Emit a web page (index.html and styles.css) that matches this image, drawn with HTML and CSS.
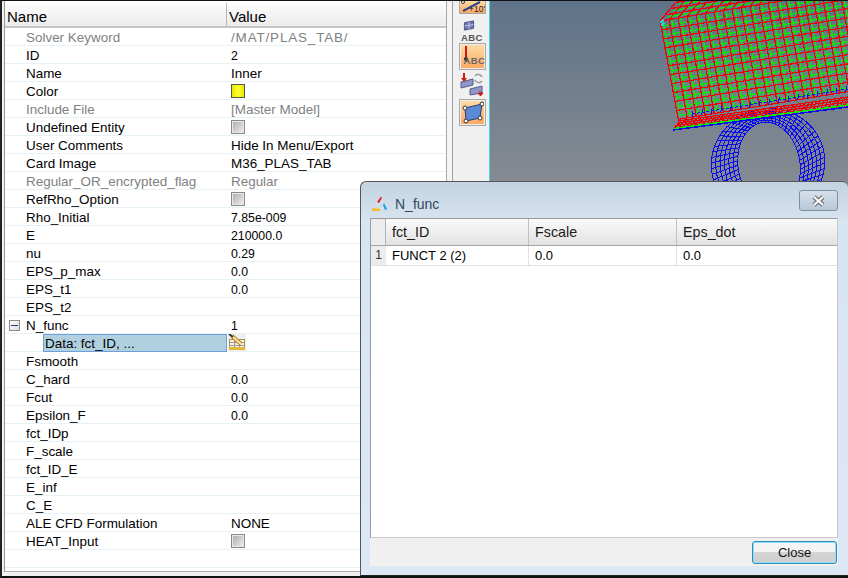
FILE: index.html
```html
<!DOCTYPE html>
<html lang="en">
<head>
<meta charset="utf-8">
<title>N_func</title>
<link rel="stylesheet" href="styles.css">
</head>
<body>
<div class="app">
  <section class="panel">
    <div class="head"><div class="head-name">Name</div><div class="head-value">Value</div></div>
    <div class="row off"><div class="n">Solver Keyword</div><div class="v wide">/MAT/PLAS_TAB/</div></div>
    <div class="row"><div class="n">ID</div><div class="v num">2</div></div>
    <div class="row"><div class="n">Name</div><div class="v">Inner</div></div>
    <div class="row"><div class="n">Color</div><div class="v"><span class="swatch"></span></div></div>
    <div class="row off"><div class="n">Include File</div><div class="v">[Master Model]</div></div>
    <div class="row"><div class="n">Undefined Entity</div><div class="v"><span class="check"></span></div></div>
    <div class="row"><div class="n">User Comments</div><div class="v">Hide In Menu/Export</div></div>
    <div class="row"><div class="n">Card Image</div><div class="v">M36_PLAS_TAB</div></div>
    <div class="row off"><div class="n">Regular_OR_encrypted_flag</div><div class="v">Regular</div></div>
    <div class="row"><div class="n">RefRho_Option</div><div class="v"><span class="check"></span></div></div>
    <div class="row"><div class="n">Rho_Initial</div><div class="v num">7.85e-009</div></div>
    <div class="row"><div class="n">E</div><div class="v num">210000.0</div></div>
    <div class="row"><div class="n">nu</div><div class="v num">0.29</div></div>
    <div class="row"><div class="n">EPS_p_max</div><div class="v num">0.0</div></div>
    <div class="row"><div class="n">EPS_t1</div><div class="v num">0.0</div></div>
    <div class="row"><div class="n">EPS_t2</div><div class="v"></div></div>
    <div class="row"><div class="n tree"><span class="minus"></span>N_func</div><div class="v num">1</div></div>
    <div class="row"><div class="n data"><span class="data-sel">Data: fct_ID, ...</span></div><div class="v edit">
      <svg class="edit-icon" width="18" height="17" viewBox="0 0 18 17"><rect x="1.500" y="5.500" width="15" height="10" fill="#fbf3d8" stroke="#a8965a"/><path d="M1 8.500h16M1 11.500h16M6.500 5v10M11.500 5v10" stroke="#9a9a9a"/><rect x="1" y="13" width="16" height="3" fill="#e3b836"/><path d="M4 2l9 8" stroke="#b87a20" stroke-width="4"/><path d="M4 2l9 8" stroke="#ffe9a8" stroke-width="2"/><path d="M1 0l4 3" stroke="#333" stroke-width="2"/></svg>
    </div></div>
    <div class="row"><div class="n">Fsmooth</div><div class="v"></div></div>
    <div class="row"><div class="n">C_hard</div><div class="v num">0.0</div></div>
    <div class="row"><div class="n">Fcut</div><div class="v num">0.0</div></div>
    <div class="row"><div class="n">Epsilon_F</div><div class="v num">0.0</div></div>
    <div class="row"><div class="n">fct_IDp</div><div class="v"></div></div>
    <div class="row"><div class="n">F_scale</div><div class="v"></div></div>
    <div class="row"><div class="n">fct_ID_E</div><div class="v"></div></div>
    <div class="row"><div class="n">E_inf</div><div class="v"></div></div>
    <div class="row"><div class="n">C_E</div><div class="v"></div></div>
    <div class="row"><div class="n">ALE CFD Formulation</div><div class="v">NONE</div></div>
    <div class="row"><div class="n">HEAT_Input</div><div class="v"><span class="check"></span></div></div>
    <div class="row"></div>
  </section>
  <div class="strip"></div>
  <nav class="tools">
    <div class="tool tool-cut">
      <svg width="25" height="12" viewBox="0 0 25 12"><path d="M3 10L20 1" stroke="#2b4a8c" stroke-width="2"/><circle cx="3" cy="1" r="1.500" fill="#fff" stroke="#333"/><text x="9" y="11" class="tool-num">+10'</text></svg>
    </div>
    <div class="plain">
      <svg width="12" height="12" viewBox="0 0 12 12"><path d="M1 3l10-2v8L1 11z" fill="#7078b4" stroke="#3e4678"/><path d="M6 2v8M1 6.500l10-1.500" stroke="#c8cce8"/></svg>
      <span class="abc">ABC</span>
    </div>
    <div class="tool tool-abc">
      <svg class="pin" width="6" height="16" viewBox="0 0 6 16"><path d="M3 0v11" stroke="#d01818" stroke-width="2"/><circle cx="3" cy="13" r="2" fill="#222"/></svg>
      <span class="abc abc-on">ABC</span>
    </div>
    <div class="plain swap">
      <svg width="24" height="24" viewBox="0 0 24 24"><path d="M1 10l12-3v6L1 16z" fill="#8f96c8" stroke="#555c88"/><path d="M10 17l12-3v7l-12 2z" fill="#8f96c8" stroke="#555c88"/><path d="M4 1v5" stroke="#d01818" stroke-width="2"/><path d="M1 6h6l-3 4z" fill="#d01818"/><path d="M20 20v-1M18 21h5l-2.500 3z" fill="#d01818" stroke="#d01818"/><path d="M15 4a4 4 0 0 1 7 1M22 9a4 4 0 0 1-7-1" stroke="#999" stroke-width="1.500" fill="none"/></svg>
    </div>
    <div class="tool">
      <svg width="23" height="23" viewBox="0 0 23 23"><path d="M4 7L21 3 19 17 5 20z" fill="#5b8bd6" stroke="#2c3f66"/><circle cx="4" cy="7" r="2" fill="#fff" stroke="#333"/><circle cx="21" cy="3" r="2" fill="#fff" stroke="#333"/><circle cx="19" cy="17" r="2" fill="#fff" stroke="#333"/><circle cx="5" cy="20" r="2" fill="#fff" stroke="#333"/></svg>
    </div>
  </nav>
  <main class="view">
    <svg id="mesh" class="mesh" viewBox="490 1 358 575" width="358" height="575"></svg>
  </main>
</div>
<div class="dialog">
  <div class="title">
    <svg class="logo" width="18" height="18" viewBox="0 0 18 18"><path d="M9 3L2 15h14z" fill="none" stroke="#d8dde3" stroke-width="2"/><path d="M6 7l4-5.500 1 1.500-3 5z" fill="#d8222e"/><path d="M13 8l3 6-2 1-2-5z" fill="#18a0e0"/><path d="M1 13l8 1v2H1z" fill="#f4b82c"/></svg>
    <span class="title-text">N_func</span>
    <button class="x" type="button" aria-label="Close window"><svg width="15" height="12" viewBox="0 0 15 12"><path d="M3 2l9 8M12 2l-9 8" stroke="#777" stroke-width="4.500"/><path d="M3 2l9 8M12 2l-9 8" stroke="#fff" stroke-width="2"/></svg></button>
  </div>
  <div class="table">
    <div class="t-head">
      <div class="t-corner"></div>
      <div class="t-h">fct_ID</div>
      <div class="t-h">Fscale</div>
      <div class="t-h">Eps_dot</div>
    </div>
    <div class="t-row">
      <div class="t-num">1</div>
      <div class="t-c">FUNCT 2 (2)</div>
      <div class="t-c">0.0</div>
      <div class="t-c">0.0</div>
    </div>
  </div>
  <div class="foot"><button class="close" type="button">Close</button></div>
</div>
<script src="mesh.js"></script>
</body>
</html>
```

FILE: styles.css
```css
* { box-sizing: border-box; }
html, body { margin: 0; padding: 0; }
body {
  width: 848px;
  height: 578px;
  overflow: hidden;
  position: relative;
  background: #f0f0f0;
  font-family: "Liberation Sans", Arial, sans-serif;
  font-size: 13px;
  color: #000;
}
.app {
  display: flex;
  height: 578px;
  border-top: 1px solid #111;
  border-bottom: 2px solid #111;
  border-left: 2px solid #222;
  overflow: hidden;
}

/* property panel */
.panel {
  width: 443px;
  flex: none;
  margin-left: 2px;
  background: #fff;
  border-left: 1px solid #999;
  border-right: 1px solid #aaa;
  border-bottom: 1px solid #a8a8a8;
  margin-bottom: 4px;
  overflow: hidden;
  font-size: 13.45px;
}
.head {
  display: flex;
  height: 26px;
  margin-top: 1px;
  padding-top: 1px;
  background: linear-gradient(#fdfdfd, #ececec);
  border-bottom: 2px solid #c4c4c4;
  font-size: 15px;
  line-height: 28px;
}
.head-name { width: 222px; padding-left: 2px; border-right: 1px solid #b4b4b4; }
.head-value { padding-left: 2px; }
.row {
  display: flex;
  height: 18px;
  line-height: 20px;
  border-bottom: 1px solid #e6f2f5;
}
.n { width: 222px; height: 17px; flex: none; padding-left: 21px; white-space: nowrap; }
.v { height: 17px; padding-left: 4px; white-space: nowrap; display: flex; align-items: flex-start; }
.num { font-size: 12.3px; }
.wide { letter-spacing: 0.85px; }
.off { color: #7f7f7f; }
.swatch, .check {
  display: block;
  width: 14px;
  height: 14px;
  margin-top: 2px;
}
.swatch { background: linear-gradient(90deg, #e8e800, #ffff30 50%, #e8e800); border: 1px solid #555; }
.check { background: linear-gradient(135deg, #a9a9a9, #f2f2f2); border: 1px solid #8a8a8a; box-shadow: inset 0 0 0 1px #e8e8e8; }
.tree { position: relative; }
.minus {
  position: absolute;
  left: 4px;
  top: 4px;
  width: 11px;
  height: 11px;
  border: 1px solid #8a8a8a;
  background: linear-gradient(135deg, #fff, #dcdcdc);
}
.minus::after {
  content: "";
  position: absolute;
  left: 1px;
  right: 1px;
  top: 4px;
  height: 1px;
  background: #2a3f80;
}
.data { padding-left: 38px; }
.data-sel {
  display: block;
  height: 18px;
  line-height: 17px;
  padding-left: 1px;
  background: #b0d0df;
  border: 1px solid #6f9fd8;
}
.edit { padding-left: 1px; }
.edit-icon { display: block; background: #eee; }

/* strip between panel and toolbar */
.strip {
  width: 6px;
  flex: none;
  background: #f4f4f4;
  border-right: 1px solid #a0a0a0;
}

/* toolbar */
.tools {
  width: 37px;
  flex: none;
  display: flex;
  flex-direction: column;
  align-items: center;
  padding-left: 2px;
  background: #f0f0f0;
  border-right: 1px solid #3fd8e8;
}
.tool {
  width: 27px;
  height: 27px;
  flex: none;
  display: flex;
  align-items: center;
  justify-content: center;
  position: relative;
  background: linear-gradient(#ffdca8, #fba862);
  border: 1px solid #a8a8a8;
  box-shadow: inset 0 0 0 1px #eee;
}
.tool-cut { height: 13px; border-top: 0; box-shadow: none; align-items: flex-end; }
.tool-num { font-size: 8.5px; fill: #222; font-family: "Liberation Sans", sans-serif; }
.plain {
  width: 27px;
  height: 29px;
  flex: none;
  display: flex;
  flex-direction: column;
  align-items: center;
  padding-top: 6px;
}
.plain svg { display: block; margin-left: -6px; }
.abc {
  font-size: 9.5px;
  line-height: 10px;
  font-weight: bold;
  color: #555;
  letter-spacing: 0.4px;
  margin-top: 2px;
}
.abc-on { position: absolute; left: 4px; bottom: 3px; color: #666; margin: 0; }
.pin { position: absolute; left: 3px; top: 2px; }
.swap { padding-top: 2px; }
.swap svg { margin-left: 0; }

/* graphics view */
.view {
  flex: 1;
  min-width: 0;
  background: linear-gradient(#5f7389, #868b92 32%, #868b92);
}
.mesh { display: block; }

/* dialog */
.dialog {
  position: absolute;
  left: 360px;
  top: 181px;
  right: 0;
  bottom: 2px;
  display: flex;
  flex-direction: column;
  padding: 0 10px 9px 9px;
  border: 1px solid #555;
  border-bottom-color: #222;
  border-right: 0;
  border-radius: 6px 6px 0 0;
  background: linear-gradient(#c3d3e1, #d7e4f1 40px, #dce8f4);
}
.title {
  height: 36px;
  flex: none;
  display: flex;
  align-items: center;
  padding-top: 8px;
  padding-left: 1px;
}
.logo { display: block; }
.title-text { margin-left: 6px; font-size: 14px; color: #33475c; }
.x {
  width: 39px;
  height: 21px;
  margin: -7px 0 0 auto;
  padding: 0;
  display: flex;
  align-items: center;
  justify-content: center;
  background: linear-gradient(#d6e0ea, #b8c8d8);
  border: 1px solid #7f8fa3;
  border-radius: 3px;
}
.table {
  flex: 1;
  min-height: 0;
  background: #fff;
  border: 1px solid #9a9a9a;
  border-right-color: #c8c8c8;
  border-bottom: 1px solid #c8c8c8;
}
.t-head, .t-row {
  display: grid;
  grid-template-columns: 15px 143px 148px 1fr;
}
.t-head { height: 27px; border-bottom: 1px solid #a4a4a4; background: linear-gradient(#fafafa, #e2e2e2); }
.t-corner { background: #ececec; border-right: 1px solid #b4b4b4; }
.t-h { font-size: 14.3px; line-height: 26px; padding-left: 6px; border-right: 1px solid #c0c0c0; color: #1a1a1a; }
.t-h:last-child { border-right: 0; }
.t-row { height: 20px; line-height: 19px; border-bottom: 1px solid #e2e2e2; }
.t-num { background: #ececec; text-align: center; color: #333; font-size: 12px; }
.t-c { padding-left: 6px; border-right: 1px solid #e2e2e2; }
.t-c:last-child { border-right: 0; }
.foot {
  height: 28px;
  flex: none;
  display: flex;
  align-items: center;
  justify-content: flex-end;
  background: #f0f0f0;
  padding-right: 1px;
}
.close {
  width: 85px;
  height: 23px;
  padding: 0;
  font: 13px "Liberation Sans", Arial, sans-serif;
  color: #111;
  background: linear-gradient(#f4f4f4 45%, #d4d4d4 50%, #cfcfcf);
  border: 1px solid #2f8fb8;
  border-radius: 3px;
  box-shadow: inset 0 0 0 1px #8fe0f4;
}
```

FILE: mesh.js
```js
(function () {
  var svg = document.getElementById('mesh');
  var NS = 'http://www.w3.org/2000/svg';
  function path(d, color, width, smooth) {
    var p = document.createElementNS(NS, 'path');
    p.setAttribute('d', d);
    p.setAttribute('stroke', color);
    p.setAttribute('stroke-width', width);
    p.setAttribute('fill', 'none');
    p.setAttribute('shape-rendering', smooth ? 'auto' : 'crispEdges');
    svg.appendChild(p);
  }
  function seg(a, b) {
    return 'M' + a[0].toFixed(1) + ' ' + a[1].toFixed(1) + 'L' + b[0].toFixed(1) + ' ' + b[1].toFixed(1);
  }

  // Tube: a band between two tilted ellipses
  function ell(e, t) {
    var x = e[2] * Math.cos(t), y = e[3] * Math.sin(t), r = e[4];
    return [e[0] + x * Math.cos(r) - y * Math.sin(r), e[1] + x * Math.sin(r) + y * Math.cos(r)];
  }
  var inner = [769, 165, 31, 43, -0.15], outer = [768, 163, 57, 54, -0.3];
  function at(f, t) {
    var a = ell(inner, t), b = ell(outer, t);
    return [a[0] + (b[0] - a[0]) * f, a[1] + (b[1] - a[1]) * f];
  }
  var d = '', i, j, t, N = 60;
  for (i = 0; i <= 6; i++) {
    for (j = 0; j < N * 2; j++) {
      d += seg(at(i / 6, j / (N * 2) * 6.2832), at(i / 6, (j + 1) / (N * 2) * 6.2832));
    }
  }
  for (j = 0; j < N; j++) {
    t = j / N * 6.2832;
    d += seg(at(0, t), at(1, t));
  }
  path(d, '#0a0af0', 1);

  // Main face of the channel
  var O = [660, 21], u = [9, -1.48], v = [1.66, 8.95];
  function P(a, b) {
    return [O[0] + a * u[0] + b * v[0], O[1] + a * u[1] + b * v[1]];
  }
  var rows = 11, cols = 22;
  var green = '', red = '';
  for (i = 0; i < rows; i++) green += seg(P(0.3, i + 0.6), P(cols, i + 0.6));
  for (j = 0; j <= cols; j++) green += seg(P(j + 0.3, 0), P(j + 0.3, rows - 0.4));
  path(green, '#00f000', 1.4, true);

  // Chamfer running back to the top
  var w = [5.2, -6.2];
  var topG = '';
  for (i = 1; i <= 3; i++) {
    topG += seg([O[0] + w[0] * i + 3, O[1] + w[1] * i + 2], [O[0] + w[0] * i + 3 + cols * u[0], O[1] + w[1] * i + 2 + cols * u[1]]);
  }
  path(topG, '#00f000', 1.4, true);

  for (i = 0; i <= rows; i++) red += seg(P(0, i), P(cols, i));
  for (j = 0; j <= cols; j++) red += seg(P(j, 0), P(j, rows));
  for (i = 1; i <= 3; i++) {
    red += seg([O[0] + w[0] * i, O[1] + w[1] * i], [O[0] + w[0] * i + cols * u[0], O[1] + w[1] * i + cols * u[1]]);
  }
  for (j = 0; j <= cols; j++) {
    var s = P(j, 0);
    red += seg(s, [s[0] + w[0] * 3, s[1] + w[1] * 3]);
  }
  path(red, '#f00000', 1.2);
  path('M660 23l3-3M661 26l3-3', '#20d8f0', 1.5);

  // Blue fragments above the flange
  var blue = '';
  for (j = 0; j < 34; j++) {
    var bx = 692 + j * 4.8, by = 114 - j * 0.77;
    blue += 'M' + bx.toFixed(1) + ' ' + by.toFixed(1) + 'l3 -0.5';
    if (j % 2 === 0) blue += 'M' + bx.toFixed(1) + ' ' + (by + 3).toFixed(1) + 'l1 -6';
  }
  path(blue, '#0a0af0', 1);

  // Flange
  var A = [673, 130], B = [848, 107], C = [848, 97], D = [678, 121];
  var fl = '';
  for (i = 0; i < 4; i++) {
    var f = i / 4;
    fl += seg([D[0] + (A[0] - D[0]) * f, D[1] + (A[1] - D[1]) * f], [C[0], C[1] + (B[1] - C[1]) * f]);
  }
  for (j = 0; j < 44; j++) {
    var g = j / 44;
    fl += seg([A[0] + (B[0] - A[0]) * g, A[1] + (B[1] - A[1]) * g], [D[0] + (C[0] - D[0]) * g + 3, D[1] + (C[1] - D[1]) * g]);
  }
  path(fl, '#f00000', 1.2);
  path(seg([674, 128.5], [848, 105]), '#00f000', 1.5);
  path(seg(A, B), '#0a0af0', 1.5);
})();
```
